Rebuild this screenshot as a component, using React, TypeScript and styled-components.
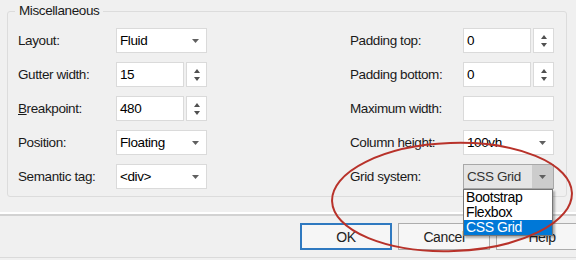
import styled, { createGlobalStyle } from "styled-components";

const GlobalStyle = createGlobalStyle`
  html, body {
    margin: 0;
    padding: 0;
    background: #f0f0f0;
    overflow: hidden;
  }
  body {
    font-family: "Liberation Sans", Arial, sans-serif;
    font-size: 13.5px;
    letter-spacing: -0.4px;
    color: #1a1a1a;
  }
`;

const leftFields = [
  { label: "Layout:", kind: "combo", value: "Fluid" },
  { label: "Gutter width:", kind: "spin", value: "15" },
  { label: "Breakpoint:", kind: "spin", value: "480", accessKey: "B" },
  { label: "Position:", kind: "combo", value: "Floating" },
  { label: "Semantic tag:", kind: "combo", value: "<div>" },
];

const rightFields = [
  { label: "Padding top:", kind: "spin", value: "0" },
  { label: "Padding bottom:", kind: "spin", value: "0" },
  { label: "Maximum width:", kind: "text", value: "" },
  { label: "Column height:", kind: "combo", value: "100vh" },
  { label: "Grid system:", kind: "open", value: "CSS Grid" },
];

const gridOptions = ["Bootstrap", "Flexbox", "CSS Grid"];

function App() {
  return (
    <Dialog>
      <GlobalStyle />
      <GroupBox>
        <Legend>Miscellaneous</Legend>
        <FieldColumns>
          <FieldColumn $labelWidth={98}>
            {leftFields.map((f) => (
              <Field key={f.label} {...f} />
            ))}
          </FieldColumn>
          <FieldColumn $labelWidth={113}>
            {rightFields.map((f) => (
              <Field key={f.label} {...f} />
            ))}
          </FieldColumn>
        </FieldColumns>
      </GroupBox>
      <Separator />
      <ButtonRow>
        <Button $isDefault>OK</Button>
        <Button>Cancel</Button>
        <Button>Help</Button>
      </ButtonRow>
      <Annotation viewBox="0 0 576 260" width="576" height="260">
        <ellipse
          cx="452"
          cy="197"
          rx="120"
          ry="54"
          transform="rotate(-2 452 197)"
          fill="none"
          stroke="#b8322a"
          strokeWidth="2"
        />
      </Annotation>
    </Dialog>
  );
}

export default App;

type FieldProps = {
  label: string;
  kind: string;
  value: string;
  accessKey?: string;
};

function Field({ label, kind, value, accessKey }: FieldProps) {
  return (
    <>
      <Label>
        {accessKey ? (
          <>
            <u>{accessKey}</u>
            {label.slice(accessKey.length)}
          </>
        ) : (
          label
        )}
      </Label>
      {kind === "combo" && (
        <ComboBox>
          <span>{value}</span>
          <ArrowCell>
            <DownArrow />
          </ArrowCell>
        </ComboBox>
      )}
      {kind === "open" && (
        <ComboWrap>
          <ComboBox $open>
            <span>{value}</span>
            <ArrowCell $open>
              <DownArrow />
            </ArrowCell>
          </ComboBox>
          <DropList>
            {gridOptions.map((o) => (
              <DropItem key={o} $selected={o === value}>
                {o}
              </DropItem>
            ))}
          </DropList>
        </ComboWrap>
      )}
      {kind === "spin" && (
        <SpinBox>
          <TextBox>{value}</TextBox>
          <SpinButtons>
            <svg width="6" height="4" viewBox="0 0 6 4">
              <path d="M0 4L3 0L6 4z" fill="#505050" />
            </svg>
            <svg width="6" height="4" viewBox="0 0 6 4">
              <path d="M0 0L6 0L3 4z" fill="#505050" />
            </svg>
          </SpinButtons>
        </SpinBox>
      )}
      {kind === "text" && <TextBox>{value}</TextBox>}
    </>
  );
}

function DownArrow() {
  return (
    <svg width="7" height="4" viewBox="0 0 7 4">
      <path d="M0 0L7 0L3.5 4z" fill="#606060" />
    </svg>
  );
}

const Dialog = styled.div`
  position: relative;
  width: 576px;
  height: 260px;
  overflow: hidden;
  padding-top: 11px;
  box-sizing: border-box;
`;

const GroupBox = styled.div`
  position: relative;
  margin-left: 7px;
  width: 560px;
  height: 186px;
  box-sizing: border-box;
  border: 1px solid #dcdcdc;
  border-radius: 3px;
  padding: 16px 12px 0 10px;
`;

const Legend = styled.div`
  position: absolute;
  top: -9px;
  left: 7px;
  padding: 0 4px;
  background: #f0f0f0;
  line-height: 16px;
`;

const FieldColumns = styled.div`
  display: flex;
  justify-content: space-between;
`;

const FieldColumn = styled.div<{ $labelWidth: number }>`
  display: grid;
  grid-template-columns: ${(p) => p.$labelWidth}px 91px;
  grid-auto-rows: 25px;
  row-gap: 9px;
`;

const Label = styled.div`
  align-self: center;
  white-space: nowrap;
`;

const FieldFrame = styled.div`
  box-sizing: border-box;
  height: 25px;
  background: #fff;
  border: 1px solid #dadada;
  display: flex;
  align-items: center;
`;

const ComboBox = styled(FieldFrame)<{ $open?: boolean }>`
  justify-content: space-between;
  padding-left: 3px;
  background: ${(p) => (p.$open ? "#e5e5e5" : "#fff")};
  border-color: ${(p) => (p.$open ? "#a8a8a8" : "#dadada")};
  color: ${(p) => (p.$open ? "#333" : "#000")};
  span {
    white-space: nowrap;
  }
`;

const ArrowCell = styled.div<{ $open?: boolean }>`
  width: 21px;
  align-self: stretch;
  display: flex;
  align-items: center;
  justify-content: center;
  background: ${(p) => (p.$open ? "#cccccc" : "transparent")};
`;

const ComboWrap = styled.div`
  position: relative;
`;

const DropList = styled.div`
  position: absolute;
  top: 25px;
  left: 0;
  width: 90px;
  box-sizing: border-box;
  background: #fff;
  border: 1px solid #767676;
  box-shadow: 2px 2px 2px rgba(0, 0, 0, 0.3);
  z-index: 2;
`;

const DropItem = styled.div<{ $selected?: boolean }>`
  height: 15px;
  line-height: 15px;
  padding-left: 2px;
  font-size: 14px;
  color: ${(p) => (p.$selected ? "#fff" : "#000")};
  background: ${(p) => (p.$selected ? "#0078d7" : "transparent")};
`;

const SpinBox = styled.div`
  display: flex;
  gap: 2px;
`;

const TextBox = styled(FieldFrame)`
  flex: 1;
  padding-left: 3px;
  color: #000;
`;

const SpinButtons = styled(FieldFrame)`
  width: 21px;
  flex: none;
  flex-direction: column;
  justify-content: center;
  gap: 4px;
`;

const Separator = styled.div`
  margin-top: 15px;
  height: 2px;
  background: #ffffff;
  border-bottom: 2px solid #d2d2d2;
`;

const ButtonRow = styled.div`
  display: flex;
  justify-content: flex-end;
  gap: 6px;
  margin-right: -12px;
  padding-top: 7px;
  height: 34px;
  border-bottom: 1px solid #dadada;
`;

const Button = styled.button<{ $isDefault?: boolean }>`
  width: 92px;
  height: 27px;
  box-sizing: border-box;
  font-family: inherit;
  font-size: 14px;
  letter-spacing: -0.4px;
  color: #222;
  background: #f6f6f6;
  border: 1px solid ${(p) => (p.$isDefault ? "#2f79c0" : "#adadad")};
  box-shadow: ${(p) => (p.$isDefault ? "inset 0 0 0 1px #2f79c0" : "none")};
  padding: 0;
`;

const Annotation = styled.svg`
  position: absolute;
  left: 0;
  top: 0;
  pointer-events: none;
  z-index: 3;
`;
